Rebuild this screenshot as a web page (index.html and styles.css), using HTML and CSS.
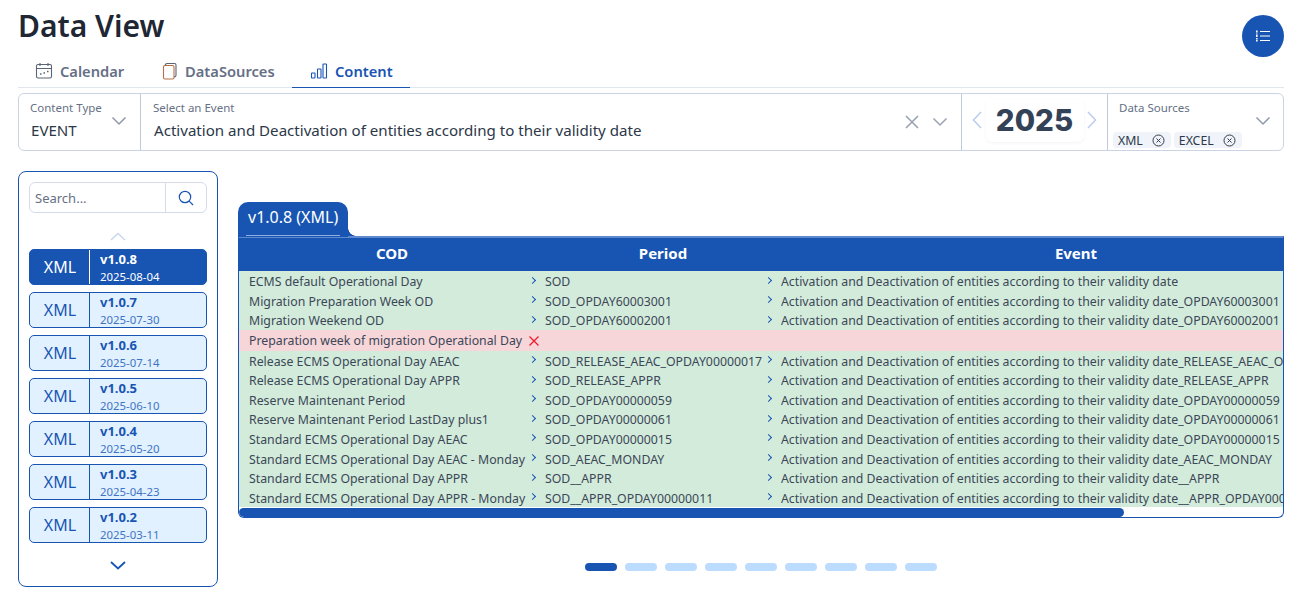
FILE: index.html
```html
<!DOCTYPE html>
<html lang="en">
<head>
<meta charset="utf-8">
<title>Data View</title>
<link rel="stylesheet" href="styles.css">
</head>
<body>
<div class="page">
  <h1 class="title">Data View</h1>
  <button class="fab" aria-label="List">
    <svg width="16" height="16" viewBox="0 0 16 16" fill="none" stroke="#fff" stroke-width="1"><path d="M5 3.500h10M5 8h10M5 12.500h10"/><path d="M1.800 2.500v2M1.800 5.500v1M1.800 7v2M1.800 10v1M1.800 11.500v2" stroke-width="1.600"/></svg>
  </button>
  <nav class="tabs">
    <a class="tab">
      <svg width="18" height="18" viewBox="0 0 18 18" fill="none" stroke="#5b6472" stroke-width="1.100"><rect x="1.500" y="2.500" width="15" height="13.500" rx="1.500"/><path d="M1.500 6.500h15M5 1v3M13 1v3"/><path d="M5 12h1.500M8.500 11h1.500M12 9.500h1.500" stroke-width="1.400"/></svg>
      Calendar
    </a>
    <a class="tab">
      <svg width="18" height="18" viewBox="0 0 18 18" fill="none" stroke="#5b6472" stroke-width="1.100"><rect x="2.500" y="3.500" width="10.500" height="13.500" rx="1.500" stroke="#b8704a"/><path d="M4 3.500C4.500 1.800 5 1.500 6 1.500h7.500c1 0 1.500.5 1.500 1.500v10.500c0 1-.5 1.500-2 1.500"/></svg>
      DataSources
    </a>
    <a class="tab active">
      <svg width="18" height="18" viewBox="0 0 18 18" fill="none" stroke="#1855b3" stroke-width="1.100"><rect x="1.500" y="11" width="3.500" height="5" rx=".5"/><rect x="7.500" y="7" width="3.500" height="9" rx=".5"/><rect x="13" y="2" width="3.500" height="14" rx=".5"/></svg>
      Content
    </a>
  </nav>

  <section class="filters">
    <div class="f-seg f-type">
      <div class="f-col">
        <span class="f-label">Content Type</span>
        <span class="f-value">EVENT</span>
      </div>
      <svg class="chev" width="16" height="10" viewBox="0 0 16 10" fill="none" stroke="#8e99ab" stroke-width="1.500"><path d="M1.500 1.500 8 8l6.500-6.500"/></svg>
    </div>
    <div class="f-seg f-event">
      <div class="f-col">
        <span class="f-label">Select an Event</span>
        <span class="f-value">Activation and Deactivation of entities according to their validity date</span>
      </div>
      <svg width="14" height="14" viewBox="0 0 14 14" fill="none" stroke="#98a2b3" stroke-width="1.600"><path d="M1 1l12 12M13 1 1 13"/></svg>
      <svg class="chev" width="16" height="10" viewBox="0 0 16 10" fill="none" stroke="#98a2b3" stroke-width="1.500"><path d="M1.500 1.500 8 8l6.500-6.500"/></svg>
    </div>
    <div class="f-seg f-year">
      <svg width="10" height="18" viewBox="0 0 10 18" fill="none" stroke="#bccfee" stroke-width="1.600"><path d="M9 1 1.500 9 9 17"/></svg>
      <span class="year">2025</span>
      <svg width="10" height="18" viewBox="0 0 10 18" fill="none" stroke="#bccfee" stroke-width="1.600"><path d="M1 1l7.500 8L1 17"/></svg>
    </div>
    <div class="f-seg f-src">
      <div class="f-col">
        <span class="f-label src-label">Data Sources</span>
        <div class="chips">
          <span class="chip">XML <svg width="13" height="13" viewBox="0 0 13 13" fill="none" stroke="#333c4a"><circle cx="6.500" cy="6.500" r="5.500"/><path d="M4.500 4.500l4 4M8.500 4.500l-4 4"/></svg></span>
          <span class="chip">EXCEL <svg width="13" height="13" viewBox="0 0 13 13" fill="none" stroke="#333c4a"><circle cx="6.500" cy="6.500" r="5.500"/><path d="M4.500 4.500l4 4M8.500 4.500l-4 4"/></svg></span>
        </div>
      </div>
      <svg class="chev" width="16" height="10" viewBox="0 0 16 10" fill="none" stroke="#8e99ab" stroke-width="1.500"><path d="M1.500 1.500 8 8l6.500-6.500"/></svg>
    </div>
  </section>

  <main class="body">
    <aside class="side">
      <div class="search">
        <span class="search-input">Search...</span>
        <span class="search-btn">
          <svg width="16" height="16" viewBox="0 0 16 16" fill="none" stroke="#1855b3" stroke-width="1.200"><circle cx="7" cy="7" r="5.700"/><path d="M11.200 11.200 15 15"/></svg>
        </span>
      </div>
      <svg class="up" width="16" height="9" viewBox="0 0 16 9" fill="none" stroke="#cbd8ec" stroke-width="1.600"><path d="M1 8l7-6.500L15 8"/></svg>
      <div class="vers">
        <div class="ver on"><span class="ver-type">XML</span><span class="ver-info"><b>v1.0.8</b><small>2025-08-04</small></span></div>
        <div class="ver"><span class="ver-type">XML</span><span class="ver-info"><b>v1.0.7</b><small>2025-07-30</small></span></div>
        <div class="ver"><span class="ver-type">XML</span><span class="ver-info"><b>v1.0.6</b><small>2025-07-14</small></span></div>
        <div class="ver"><span class="ver-type">XML</span><span class="ver-info"><b>v1.0.5</b><small>2025-06-10</small></span></div>
        <div class="ver"><span class="ver-type">XML</span><span class="ver-info"><b>v1.0.4</b><small>2025-05-20</small></span></div>
        <div class="ver"><span class="ver-type">XML</span><span class="ver-info"><b>v1.0.3</b><small>2025-04-23</small></span></div>
        <div class="ver"><span class="ver-type">XML</span><span class="ver-info"><b>v1.0.2</b><small>2025-03-11</small></span></div>
      </div>
      <svg class="down" width="16" height="9" viewBox="0 0 16 9" fill="none" stroke="#1855b3" stroke-width="1.800"><path d="M1 1l7 6.500L15 1"/></svg>
    </aside>

    <div class="view">
      <div class="vtab"><span>v1.0.8 (XML)</span></div>
      <div class="grid-box">
        <div class="grid-scroll">
          <div class="row head"><div>COD</div><div>Period</div><div>Event</div></div>
          <div class="row ok"><div class="c1">ECMS default Operational Day<i></i></div><div class="c2">SOD<i></i></div><div class="c3">Activation and Deactivation of entities according to their validity date</div></div>
          <div class="row ok"><div class="c1">Migration Preparation Week OD<i></i></div><div class="c2">SOD_OPDAY60003001<i></i></div><div class="c3">Activation and Deactivation of entities according to their validity date_OPDAY60003001</div></div>
          <div class="row ok"><div class="c1">Migration Weekend OD<i></i></div><div class="c2">SOD_OPDAY60002001<i></i></div><div class="c3">Activation and Deactivation of entities according to their validity date_OPDAY60002001</div></div>
          <div class="row bad"><div class="c1">Preparation week of migration Operational Day<svg class="no" width="10" height="10" viewBox="0 0 10 10" fill="none" stroke="#f01c2c" stroke-width="1.300"><path d="M.5.500l9 9M9.500.500l-9 9"/></svg></div><div class="c2"></div><div class="c3"></div></div>
          <div class="row ok"><div class="c1">Release ECMS Operational Day AEAC<i></i></div><div class="c2">SOD_RELEASE_AEAC_OPDAY00000017<i></i></div><div class="c3">Activation and Deactivation of entities according to their validity date_RELEASE_AEAC_OPDAY00000017</div></div>
          <div class="row ok"><div class="c1">Release ECMS Operational Day APPR<i></i></div><div class="c2">SOD_RELEASE_APPR<i></i></div><div class="c3">Activation and Deactivation of entities according to their validity date_RELEASE_APPR</div></div>
          <div class="row ok"><div class="c1">Reserve Maintenant Period<i></i></div><div class="c2">SOD_OPDAY00000059<i></i></div><div class="c3">Activation and Deactivation of entities according to their validity date_OPDAY00000059</div></div>
          <div class="row ok"><div class="c1">Reserve Maintenant Period LastDay plus1<i></i></div><div class="c2">SOD_OPDAY00000061<i></i></div><div class="c3">Activation and Deactivation of entities according to their validity date_OPDAY00000061</div></div>
          <div class="row ok"><div class="c1">Standard ECMS Operational Day AEAC<i></i></div><div class="c2">SOD_OPDAY00000015<i></i></div><div class="c3">Activation and Deactivation of entities according to their validity date_OPDAY00000015</div></div>
          <div class="row ok"><div class="c1">Standard ECMS Operational Day AEAC - Monday<i></i></div><div class="c2">SOD_AEAC_MONDAY<i></i></div><div class="c3">Activation and Deactivation of entities according to their validity date_AEAC_MONDAY</div></div>
          <div class="row ok"><div class="c1">Standard ECMS Operational Day APPR<i></i></div><div class="c2">SOD__APPR<i></i></div><div class="c3">Activation and Deactivation of entities according to their validity date__APPR</div></div>
          <div class="row ok"><div class="c1">Standard ECMS Operational Day APPR - Monday<i></i></div><div class="c2">SOD__APPR_OPDAY00000011<i></i></div><div class="c3">Activation and Deactivation of entities according to their validity date__APPR_OPDAY00000011</div></div>
        </div>
        <div class="sbar"><div class="thumb"></div></div>
      </div>
      <div class="dots"><span class="dot on"></span><span class="dot"></span><span class="dot"></span><span class="dot"></span><span class="dot"></span><span class="dot"></span><span class="dot"></span><span class="dot"></span><span class="dot"></span></div>
    </div>
  </main>
</div>
</body>
</html>
```
FILE: styles.css
```css
* { box-sizing: border-box; }
html, body { margin: 0; height: 100%; overflow: hidden; background: #fff; }
body { font-family: "Noto Sans", sans-serif; color: #212a37; }
.page { position: relative; padding: 0 19px 0 18px; height: 600px; }

.title { margin: 0; height: 54px; padding-top: 5px; font-size: 30px; line-height: 42px; font-weight: 600; color: #1e2733; }
.fab { position: absolute; top: 15px; right: 19px; width: 42px; height: 42px; border: 0; border-radius: 50%; background: #1855b3; display: flex; align-items: center; justify-content: center; padding: 0; }

.tabs { display: flex; height: 34px; border-bottom: 1px solid #e2e6ef; }
.tab { display: flex; flex: none; align-items: center; gap: 7px; font-size: 14.7px; font-weight: 600; color: #667085; margin-bottom: -1px; }
.tab:nth-child(1) { width: 125px; padding-left: 17px; }
.tab:nth-child(2) { width: 149px; padding-left: 18px; gap: 6px; }
.tab:nth-child(3) { width: 118px; padding-left: 18px; }
.tab.active { color: #1855b3; border-bottom: 1px solid #1855b3; }

.filters { margin-top: 5px; height: 58px; display: flex; border: 1px solid #cbd4e4; border-radius: 6px; }
.f-seg { display: flex; flex: none; align-items: center; border-left: 1px solid #bfcbdd; }
.f-seg:first-child { border-left: 0; }
.f-col { display: flex; flex-direction: column; min-width: 0; flex: 1; align-self: flex-start; padding-top: 6px; }
.f-label { font-size: 11.5px; line-height: 16px; color: #667085; }
.f-value { font-size: 15.1px; line-height: 22px; color: #2c3848; margin-top: 3px; white-space: nowrap; }
.f-type { width: 121px; padding: 0 13px 3px 11px; }
.f-type .f-value { padding-left: 1px; }
.f-event { flex: 1; min-width: 0; padding: 0 13px 0 12px; gap: 13px; }
.f-event .f-value { padding-left: 1px; }
.f-year { width: 146px; padding: 0 10px 4px; justify-content: space-between; }
.year { width: 98px; text-align: center; font-family: Inter, sans-serif; font-weight: 800; font-size: 29.500px; line-height: 43px; color: #344257; border-radius: 6px; box-shadow: 0 1px 3px rgba(30,50,90,.06); }
.f-src { width: 176px; padding: 0 12px 3px 5px; }
.src-label { padding-left: 6px; }
.chips { display: flex; gap: 3px; margin-top: 16px; }
.chip { display: flex; flex: none; align-items: center; gap: 9px; background: #f0f3f9; border-radius: 4px; padding: 1px 6px 0 5px; font-size: 12.3px; line-height: 15px; color: #2c3848; height: 16px; }

.body { display: flex; margin-top: 20px; }
.side { width: 200px; height: 416px; border: 1px solid #1855b3; border-radius: 8px; padding: 10px; display: flex; flex-direction: column; align-items: center; flex: none; }
.search { width: 100%; height: 31px; display: flex; flex: none; border: 1px solid #d4dce9; border-radius: 6px; }
.search-input { flex: 1; font-size: 13px; line-height: 29px; padding: 1px 0 0 5px; color: #667085; }
.search-btn { width: 41px; border-left: 1px solid #d4dce9; display: flex; align-items: center; justify-content: center; }
.up { margin-top: 19px; flex: none; }
.vers { width: 100%; margin-top: 8px; display: flex; flex-direction: column; gap: 7px; }
.ver { height: 36px; display: flex; border: 1px solid #1855b3; border-radius: 5px; background: #e2f1ff; color: #1855b3; }
.ver-type { width: 60px; border-right: 1px solid #1855b3; font-size: 16px; text-align: center; line-height: 34px; padding-left: 1px; }
.ver-info { flex: 1; display: flex; flex-direction: column; padding-left: 10px; }
.ver-info b { font-size: 13px; line-height: 18px; font-weight: 700; }
.ver-info small { font-size: 11.4px; line-height: 15px; margin-top: 1px; color: #3f74c4; }
.ver.on { background: #1855b3; color: #fff; }
.ver.on .ver-type { border-right-color: #fff; }
.ver.on small { color: #fff; }
.down { margin-top: 18px; flex: none; }

.view { flex: 1; min-width: 0; margin-left: 20px; padding-top: 31px; }
.vtab { width: 110px; height: 35px; background: #1855b3; border-radius: 10px 10px 0 0; padding: 0 8px; color: #fff; margin-bottom: -1px; position: relative; z-index: 1; }
.vtab::after { content: ""; position: absolute; left: 110px; bottom: 1px; width: 8px; height: 8px; background: radial-gradient(circle at 100% 0, transparent 7.500px, #1855b3 8px); }
.vtab span { display: block; height: 34px; padding-left: 2px; font-size: 16px; line-height: 30px; border-bottom: 1px solid #8fb0e3; }
.grid-box { height: 282px; border: 1px solid #1855b3; border-top: 2px solid #5f89cd; border-radius: 0 0 6px 6px; overflow: hidden; position: relative; background: #fff; }
.grid-scroll { width: 100%; overflow: hidden; }
.row { display: grid; grid-template-columns: 306px 236px 590px; width: 1132px; height: 19.55px; font-size: 12.3px; line-height: 19px; color: #3b4757; white-space: nowrap; }
.row > div { overflow: hidden; display: flex; align-items: center; justify-content: space-between; padding: 1.700px 10px 0 0; }
.row .c1 { padding-left: 10px; }
.row.head { height: 33px; background: #1855b3; color: #fff; font-size: 15px; font-weight: 700; }
.row.head > div { justify-content: center; padding: 0 0 3px; }
.row.ok { background: #d3ebdb; }
.row.bad { background: #f7d6da; height: 21px; }
.row .c3 { padding-right: 0; justify-content: flex-start; }
.row i { flex: none; width: 5px; height: 5px; margin: -3px 0 0 2px; border-top: 1.800px solid #1855b3; border-right: 1.800px solid #1855b3; transform: rotate(45deg); }
.no { flex: none; margin-right: -4px; }
.sbar { position: absolute; left: 0; right: 0; bottom: 0; height: 9px; }
.thumb { width: 885px; height: 9px; background: #1855b3; border-radius: 5px; }

.dots { display: flex; justify-content: center; gap: 8px; margin-top: 45px; }
.dot { width: 32px; height: 8px; border-radius: 4px; background: #bbdcff; }
.dot.on { background: #1855b3; }
```
